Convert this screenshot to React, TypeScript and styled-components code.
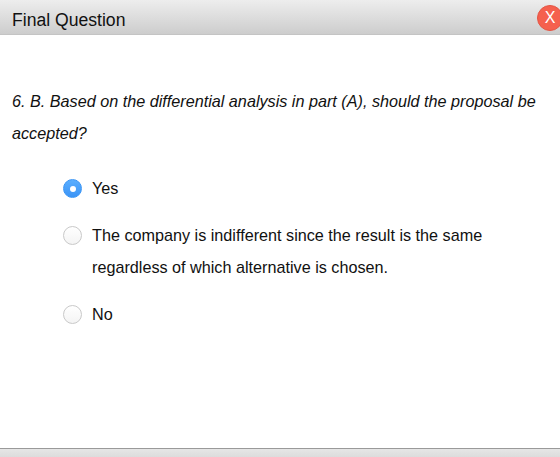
import React, { useState } from 'react';
import styled, { createGlobalStyle } from 'styled-components';

const GlobalStyle = createGlobalStyle`
  html, body {
    margin: 0;
    padding: 0;
    height: 100%;
    background: #ffffff;
    overflow: hidden;
  }
  #root {
    height: 100%;
  }
`;

const options = [
  'Yes',
  'The company is indifferent since the result is the same regardless of which alternative is chosen.',
  'No',
];

const App = () => {
  const [selected, setSelected] = useState(0);

  return (
    <>
      <GlobalStyle />
      <Window>
        <Header>
          <Title>Final Question</Title>
          <CloseButton aria-label='close'>X</CloseButton>
        </Header>
        <Body>
          <Question>
            6. B. Based on the differential analysis in part (A), should the proposal be accepted?
          </Question>
          <OptionList>
            {options.map((text, i) => (
              <Option key={text} onClick={() => setSelected(i)}>
                <Radio $checked={selected === i} />
                <OptionText>{text}</OptionText>
              </Option>
            ))}
          </OptionList>
        </Body>
        <Footer />
      </Window>
    </>
  );
};

export default App;

const Window = styled.div`
  height: 100%;
  display: flex;
  flex-direction: column;
  font-family: 'Liberation Sans', Arial, Helvetica, sans-serif;
  color: #111111;
  overflow: hidden;
`;

const Header = styled.div`
  height: 35px;
  flex-shrink: 0;
  display: flex;
  align-items: center;
  justify-content: space-between;
  padding: 0 0 0 12px;
  background: linear-gradient(to bottom, #ededed, #cdcdcd);
  border-bottom: 1px solid #c4c4c4;
  box-sizing: border-box;
`;

const Title = styled.h1`
  margin: 0;
  font-size: 17.6px;
  font-weight: 400;
  color: #111111;
  padding-top: 6px;
`;

const CloseButton = styled.button`
  width: 26px;
  height: 26px;
  margin-right: -3px;
  margin-top: 1px;
  padding: 0;
  border-radius: 50%;
  border: 1px solid #e45544;
  background: #f5604e;
  color: #ffffff;
  font-family: 'Liberation Sans', Arial, sans-serif;
  font-size: 16px;
  line-height: 24px;
  cursor: pointer;
`;

const Body = styled.div`
  flex: 1;
  padding: 50px 12px 0;
`;

const Question = styled.p`
  margin: 0;
  font-size: 16.2px;
  font-style: italic;
  line-height: 32px;
  color: #111111;
`;

const OptionList = styled.div`
  display: flex;
  flex-direction: column;
  gap: 15px;
  margin-top: 23px;
  padding-left: 51px;
  padding-right: 40px;
`;

const Option = styled.label`
  display: flex;
  align-items: flex-start;
  gap: 10px;
  cursor: pointer;
`;

const Radio = styled.span<{ $checked: boolean }>`
  flex-shrink: 0;
  width: 19px;
  height: 19px;
  margin-top: 7px;
  border-radius: 50%;
  box-sizing: border-box;
  position: relative;
  border: 1px solid ${(p) => (p.$checked ? '#3a95f5' : '#c9c9c9')};
  background: ${(p) =>
    p.$checked ? 'linear-gradient(to bottom, #5aaeff, #3b94f6)' : 'linear-gradient(to bottom, #ffffff, #f4f4f4)'};

  &::after {
    content: '';
    display: ${(p) => (p.$checked ? 'block' : 'none')};
    position: absolute;
    left: 50%;
    top: 50%;
    width: 6px;
    height: 6px;
    margin: -3px 0 0 -3px;
    border-radius: 50%;
    background: #ffffff;
  }
`;

const OptionText = styled.span`
  font-size: 16.2px;
  line-height: 32px;
  color: #111111;
`;

const Footer = styled.div`
  height: 8px;
  flex-shrink: 0;
  border-top: 1px solid #9a9a9a;
  background: linear-gradient(to bottom, #e6e6e6, #dcdcdc);
`;
